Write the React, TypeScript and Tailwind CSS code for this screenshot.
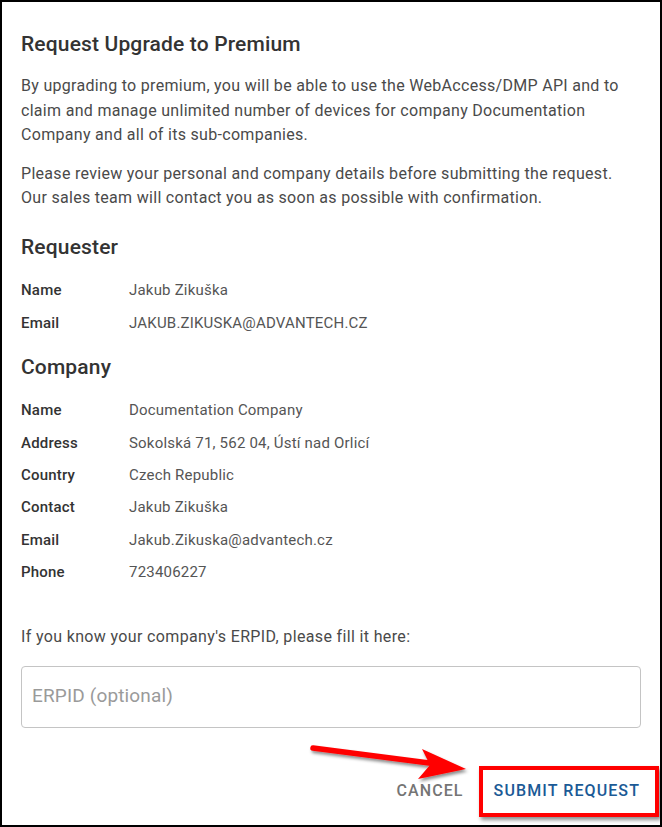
import React from "react";

const Row = ({ label, value }: { label: string; value: string }) => (
  <div className="flex items-center h-[32.4px] text-[15px] tracking-[0.2px]">
    <div className="w-[108px] font-medium text-[#333]">{label}</div>
    <div className="text-[#555]">{value}</div>
  </div>
);

export default function App() {
  return (
    <div
      className="relative w-[662px] h-[827px] border-2 border-black bg-white overflow-hidden"
      style={{ fontFamily: "Roboto, 'Noto Sans', Arial, sans-serif" }}
    >
      <div className="px-[19px] pt-[26px]">
        <h2 className="text-[21px] leading-[32px] font-medium tracking-[0.15px] text-[#333]">Request Upgrade to Premium</h2>
        <p className="mt-[14px] text-[16px] leading-[24.5px] tracking-[0.3px] text-[#4a4a4a]">
          By upgrading to premium, you will be able to use the WebAccess/DMP API and to claim and manage unlimited number of devices for company Documentation Company and all of its sub-companies.
        </p>
        <p className="mt-[14px] text-[16px] leading-[24.5px] tracking-[0.3px] text-[#4a4a4a]">
          Please review your personal and company details before submitting the request. Our sales team will contact you as soon as possible with confirmation.
        </p>
        <h3 className="mt-[20px] text-[21px] leading-[32px] font-medium tracking-[0.15px] text-[#333]">Requester</h3>
        <div className="mt-[12px]">
          <Row label="Name" value="Jakub Zikuška" />
          <Row label="Email" value="JAKUB.ZIKUSKA@ADVANTECH.CZ" />
        </div>
        <h3 className="mt-[12px] text-[21px] leading-[32px] font-medium tracking-[0.15px] text-[#333]">Company</h3>
        <div className="mt-[11px]">
          <Row label="Name" value="Documentation Company" />
          <Row label="Address" value="Sokolská 71, 562 04, Ústí nad Orlicí" />
          <Row label="Country" value="Czech Republic" />
          <Row label="Contact" value="Jakub Zikuška" />
          <Row label="Email" value="Jakub.Zikuska@advantech.cz" />
          <Row label="Phone" value="723406227" />
        </div>
        <p className="mt-[36px] text-[16px] leading-[24px] tracking-[0.35px] text-[#4a4a4a]">
          If you know your company's ERPID, please fill it here:
        </p>
        <div className="mt-[17px] h-[62px] border border-[#c4c4c4] rounded-[4px] flex items-center px-[10px]">
          <span className="text-[19px] tracking-[0.15px] text-[#9a9a9a]">ERPID (optional)</span>
        </div>
        <div className="mt-[51px] flex justify-end items-center gap-[30px] pr-[1px] text-[16px] font-medium tracking-[1.1px] leading-[24px]">
          <span className="text-[#757575]">CANCEL</span>
          <span className="text-[#1b5a96]">SUBMIT REQUEST</span>
        </div>
      </div>

      <div
        className="absolute left-[477px] top-[764px] w-[180px] h-[51px] border-[4px] border-[#ff0000]"
        style={{ boxShadow: "2px 3px 4px rgba(0,0,0,0.45)" }}
      />
      <svg className="absolute left-[300px] top-[735px]" width="180" height="50" viewBox="0 0 180 50">
        <defs>
          <filter id="sh" x="-10%" y="-30%" width="130%" height="180%">
            <feDropShadow dx="1.5" dy="2.5" stdDeviation="1.5" floodColor="#000" floodOpacity="0.45" />
          </filter>
        </defs>
        <g filter="url(#sh)">
          <line x1="11" y1="11" x2="135" y2="27" stroke="#ff0000" strokeWidth="5.5" strokeLinecap="round" />
          <polygon points="120,12 164,32 116,42 128,28" fill="#ff0000" />
        </g>
      </svg>
    </div>
  );
}
